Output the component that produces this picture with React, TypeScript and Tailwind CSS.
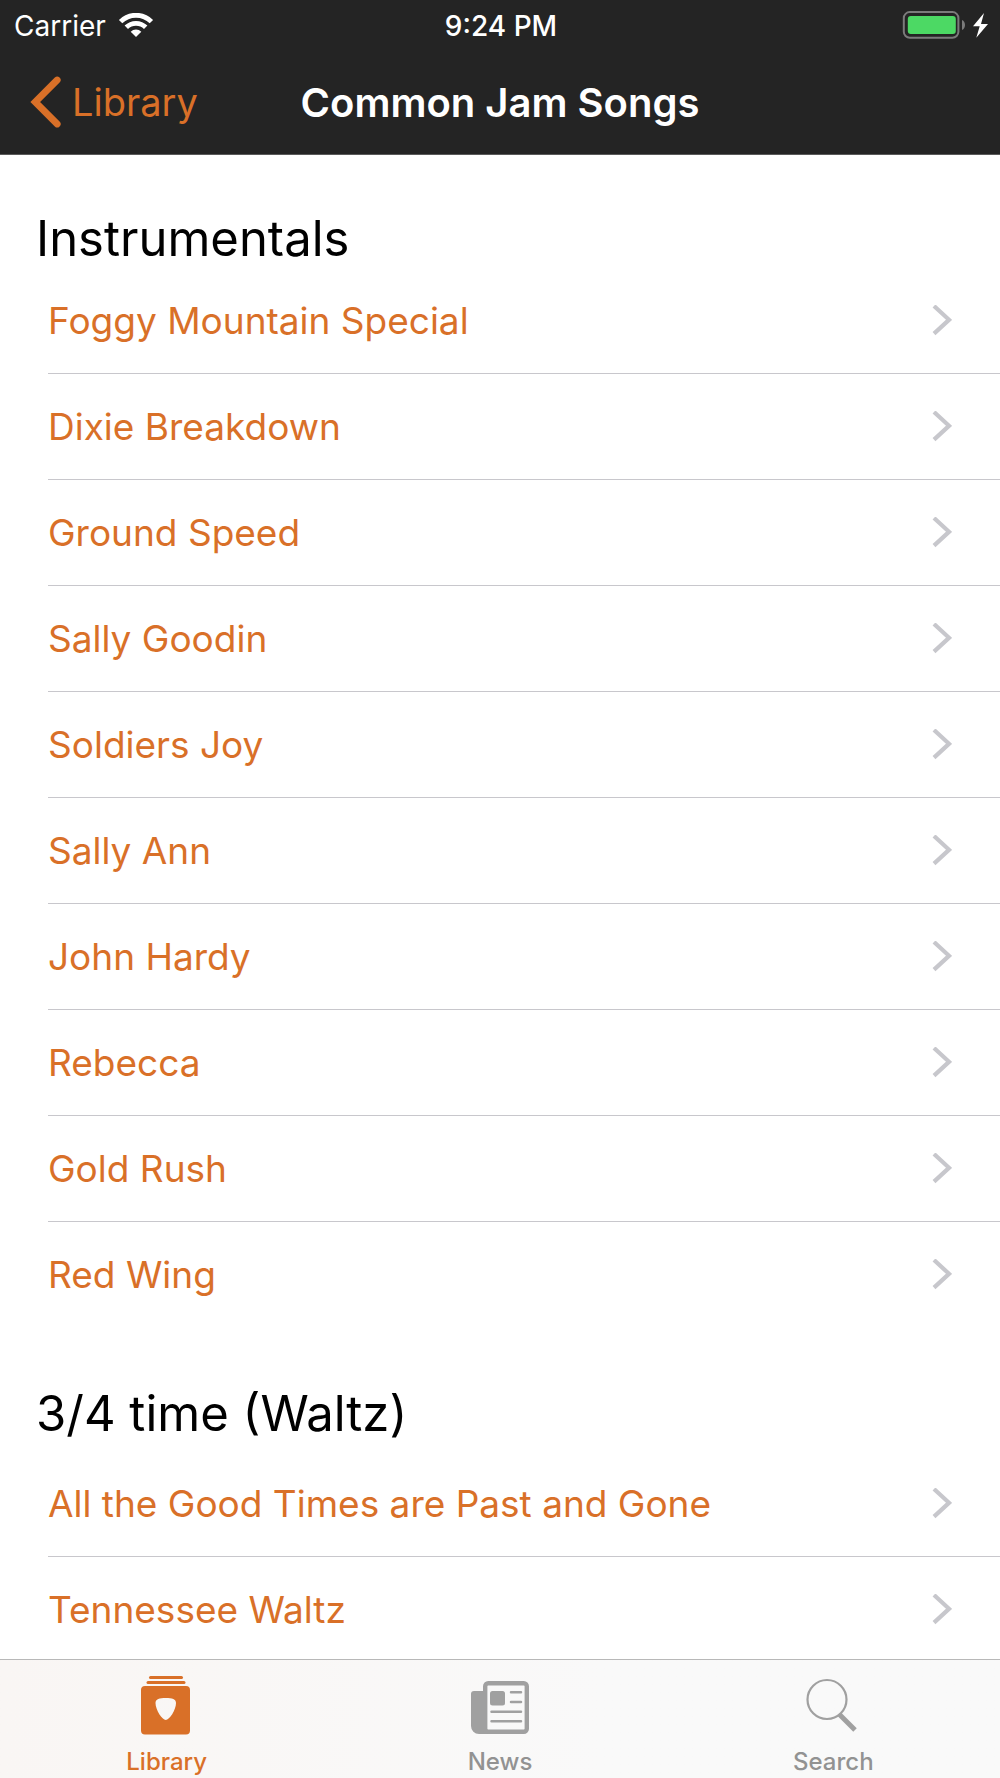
import type { ReactNode } from 'react'

interface Section {
  title: string
  songs: string[]
}

const sections: Section[] = [
  {
    title: 'Instrumentals',
    songs: [
      'Foggy Mountain Special',
      'Dixie Breakdown',
      'Ground Speed',
      'Sally Goodin',
      'Soldiers Joy',
      'Sally Ann',
      'John Hardy',
      'Rebecca',
      'Gold Rush',
      'Red Wing',
    ],
  },
  {
    title: '3/4 time (Waltz)',
    songs: ['All the Good Times are Past and Gone', 'Tennessee Waltz'],
  },
]

function WifiIcon() {
  return (
    <svg width="36" height="26" viewBox="0 0 36 26" fill="none" aria-hidden="true">
      <path d="M2.6 8.6a21.8 21.8 0 0 1 30.8 0M8.3 14.3a13.75 13.75 0 0 1 19.4 0" stroke="white" strokeWidth="4.8" />
      <path d="M18 24l-5.3-5.3a7.5 7.5 0 0 1 10.6 0z" fill="white" />
    </svg>
  )
}

function BatteryIcon() {
  return (
    <svg width="86" height="30" viewBox="0 0 86 30" fill="none" aria-hidden="true">
      <rect x="1.8" y="1.1" width="54.6" height="25.6" rx="6" stroke="#7b7b7b" strokeWidth="2" />
      <rect x="5.8" y="5" width="48" height="18" rx="3" fill="#4cd964" />
      <path d="M60 9c4 1.5 4 8.5 0 10z" fill="#7b7b7b" />
      <path d="M82 2L71 15.3h6.7l-3.4 11.4L86 13h-7z" fill="white" />
    </svg>
  )
}

function StatusBar() {
  return (
    <div className="grid h-[51px] grid-cols-[1fr_auto_1fr] items-center pl-[14px] pr-3 text-[28px]">
      <div className="flex items-center gap-3">
        <span>Carrier</span>
        <WifiIcon />
      </div>
      <span className="font-medium">9:24 PM</span>
      <div className="flex justify-end">
        <BatteryIcon />
      </div>
    </div>
  )
}

function NavBar() {
  return (
    <div className="grid h-[103px] grid-cols-[1fr_auto_1fr] items-center px-[30px]">
      <a href="#library" className="flex items-center gap-[11px] text-[38px] text-[#d97028]">
        <svg width="31" height="54" viewBox="0 0 31 54" fill="none" aria-hidden="true">
          <path d="M27.200 4L5.200 26l22 22" stroke="currentColor" strokeWidth="6.800" strokeLinecap="round" />
        </svg>
        <span>Library</span>
      </a>
      <h1 className="text-[40px] font-semibold">Common Jam Songs</h1>
    </div>
  )
}

function SongRow({ title }: { title: string }) {
  return (
    <li className="ml-12 border-b border-[#c8c7cc] last:border-transparent">
      <a href="#song" className="flex h-[105px] items-center justify-between pr-12 text-[37px] text-[#d97028]">
        <span>{title}</span>
        <svg width="20" height="32" viewBox="0 0 20 32" fill="none" aria-hidden="true">
          <path d="M2 1L17 14.800L2 28.600" stroke="#c7c7cc" strokeWidth="4.200" />
        </svg>
      </a>
    </li>
  )
}

function SongSection({ title, songs }: Section) {
  return (
    <section className="pt-14 not-first:pt-[58px]">
      <h2 className="px-9 text-[49px] leading-[56px]">{title}</h2>
      <ul className="pt-px in-[section:not(:first-child)]:pt-[9px]">
        {songs.map((song) => (
          <SongRow key={song} title={song} />
        ))}
      </ul>
    </section>
  )
}

function LibraryIcon() {
  return (
    <svg width="60" height="60" viewBox="0 0 60 60" fill="currentColor" aria-hidden="true">
      <rect x="12" y="0" width="34" height="3" rx="1.500" />
      <rect x="9.500" y="5" width="39" height="3" rx="1.500" />
      <path
        fillRule="evenodd"
        d="M8 10h41q4 0 4 4v40.500q0 4-4 4H8q-4 0-4-4V14q0-4 4-4zM28.800 22c-6.500 0-10.300 1-10.300 5 0 7 6.800 17 10.300 17s10.200-10 10.200-17c0-4-3.700-5-10.200-5z"
      />
    </svg>
  )
}

function NewsIcon() {
  return (
    <svg width="60" height="60" viewBox="0 0 60 60" fill="none" aria-hidden="true">
      <path d="M13 15H4a3 3 0 0 0-3 3v32a8 8 0 0 0 8 8h42V54H17V15z" fill="currentColor" />
      <rect x="15.200" y="7.200" width="41.600" height="48.600" rx="3" stroke="currentColor" strokeWidth="4.400" />
      <rect x="20" y="15" width="15" height="14.500" rx="2.500" fill="currentColor" />
      <path
        d="M41 16.200h10M41 26h10M21.500 35.700h29.500M21.500 45.300h29.500"
        stroke="currentColor"
        strokeWidth="2.500"
        strokeLinecap="round"
      />
    </svg>
  )
}

function SearchIcon() {
  return (
    <svg width="60" height="60" viewBox="0 0 60 60" fill="none" stroke="currentColor" aria-hidden="true">
      <circle cx="24" cy="23.500" r="19.500" strokeWidth="2.200" />
      <path d="M36.500 38.500L52 54" strokeWidth="5" />
    </svg>
  )
}

function Tab({ label, active, children }: { label: string; active?: boolean; children: ReactNode }) {
  return (
    <button
      type="button"
      className={`flex flex-1 flex-col items-center gap-[14px] pt-4 pb-1 ${active ? 'text-[#d97028]' : 'text-[#a0a0a0]'}`}
    >
      {children}
      <span className={`text-2xl leading-6 font-medium ${active ? '' : 'text-[#929292]'}`}>{label}</span>
    </button>
  )
}

export default function App() {
  return (
    <div className="flex h-screen flex-col bg-white font-['Inter',sans-serif] text-black">
      <header className="shrink-0 border-b border-[#5a5a5a] bg-[#242424] text-white">
        <StatusBar />
        <NavBar />
      </header>

      <main className="min-h-0 flex-1 overflow-hidden">
        {sections.map((section) => (
          <SongSection key={section.title} {...section} />
        ))}
      </main>

      <nav className="flex shrink-0 border-t border-[#b8b8b8] bg-linear-to-r from-[#f9f6f4] to-[#f9f9f9] to-60%">
        <Tab label="Library" active>
          <LibraryIcon />
        </Tab>
        <Tab label="News">
          <NewsIcon />
        </Tab>
        <Tab label="Search">
          <SearchIcon />
        </Tab>
      </nav>
    </div>
  )
}
